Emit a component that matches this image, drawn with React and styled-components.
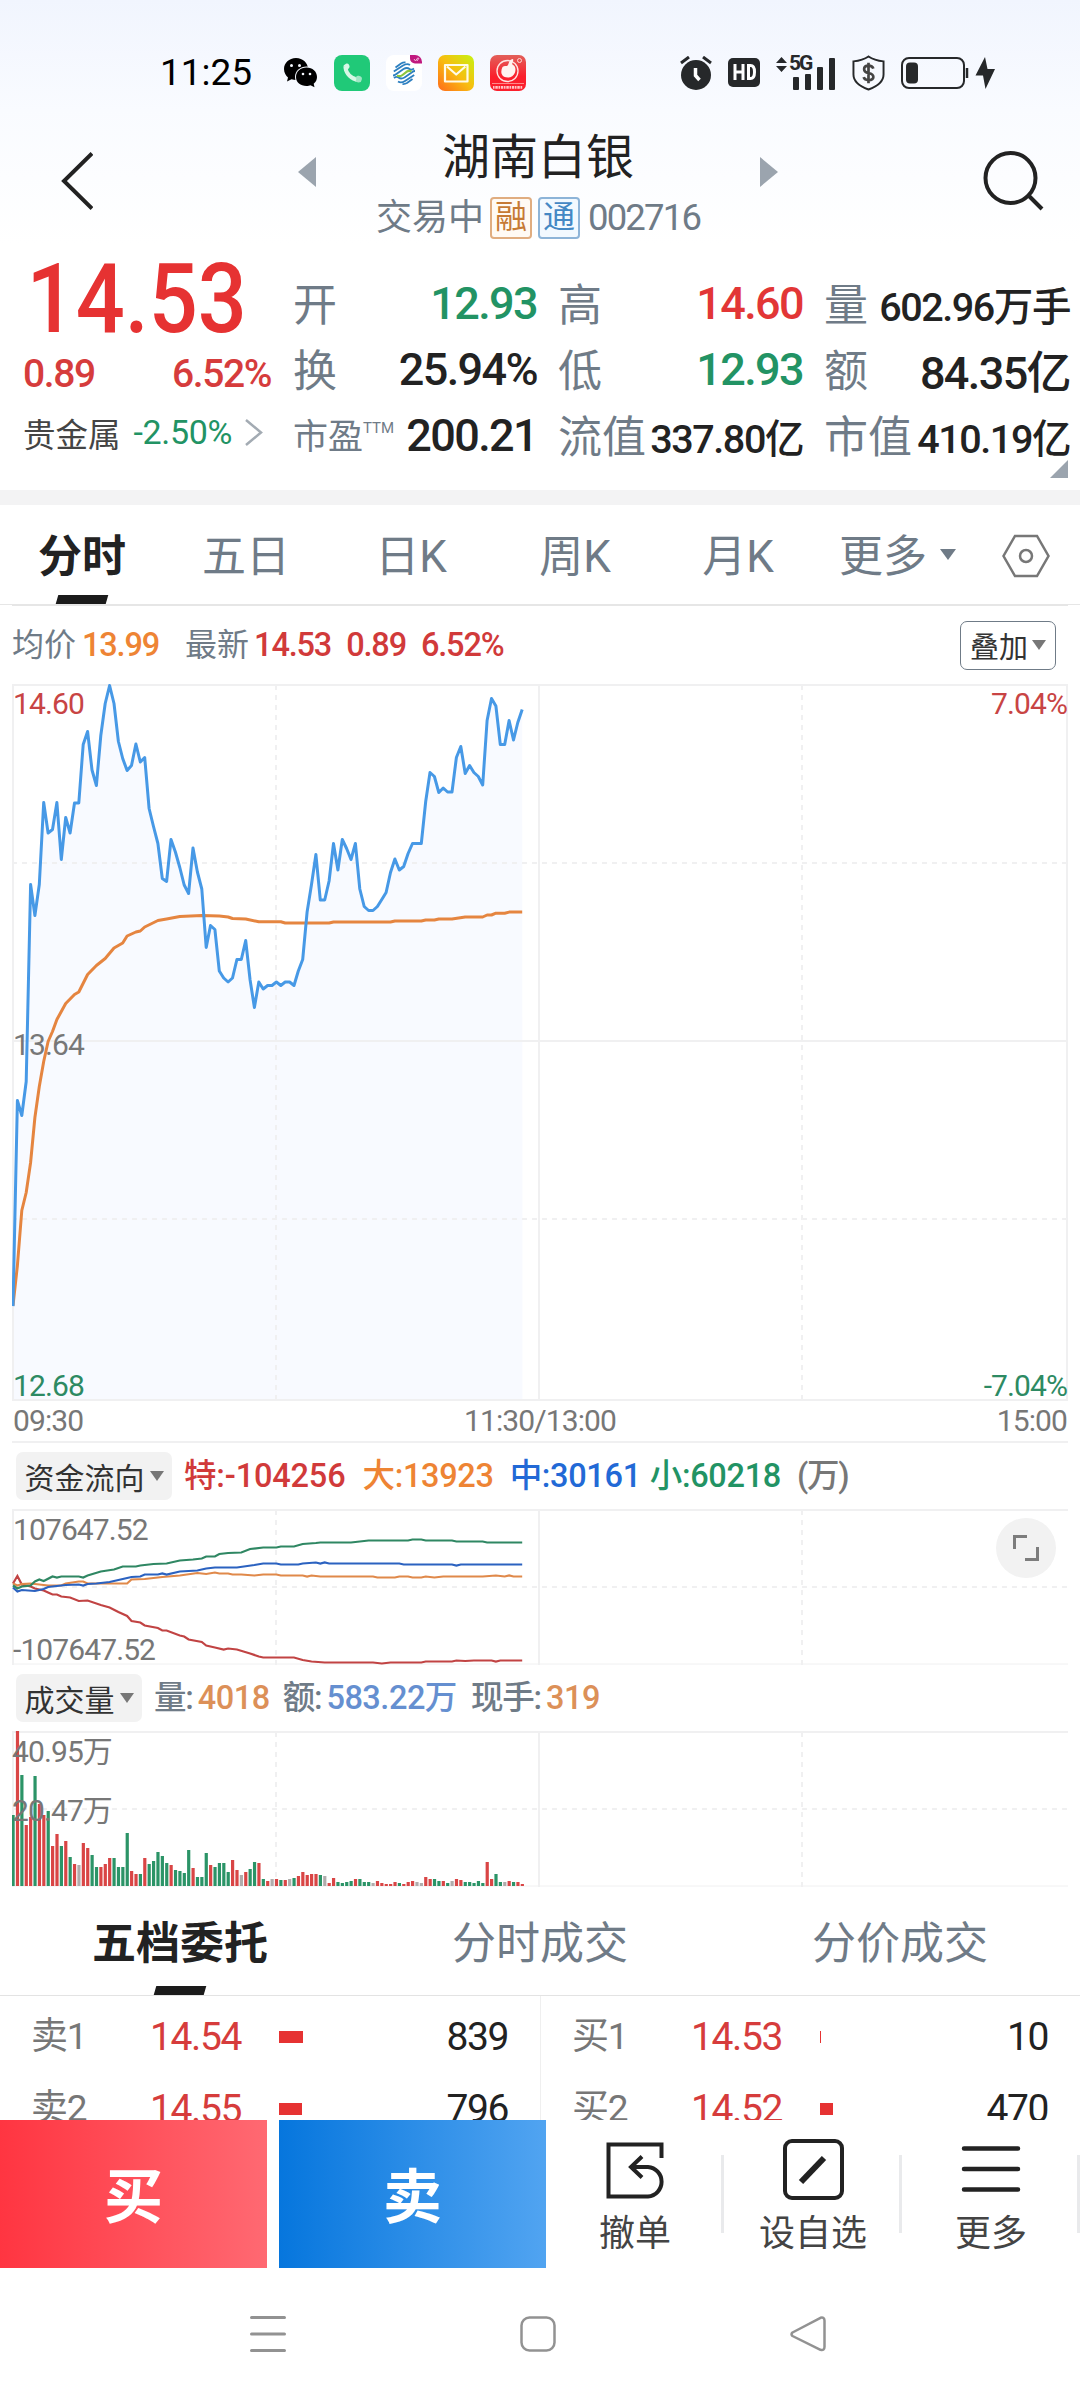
import React from "react";
import styled, { createGlobalStyle } from "styled-components";

const GlobalStyle = createGlobalStyle`
  * {
    box-sizing: border-box;
  }
  body {
    margin: 0;
    background: #fff;
    font-family: Roboto, "Noto Sans CJK SC", sans-serif;
    color: #222;
  }
  svg {
    display: block;
    flex: none;
  }
`;

const RED = "#e23636";
const GREEN = "#229364";
const ORANGE = "#ee8434";
const SLATE = "#6f7b87";
const GREY = "#777";
const LINE = "#f0f0f1";

const Screen = styled.div`
  width: 1080px;
  height: 2400px;
  overflow: hidden;
  display: flex;
  flex-direction: column;
  background: linear-gradient(#f1f5fe 0, #f9fbff 110px, #fff 245px);
`;

const Num = styled.span`
  font-size: ${(p) => p.$size}px;
  font-weight: ${(p) => p.$weight || 500};
  color: ${(p) => p.$color || "#222"};
  letter-spacing: ${(p) => (p.$track === undefined ? -0.036 : p.$track)}em;
  white-space: nowrap;
`;

/* ---------- status bar ---------- */

const StatusBar = styled.div`
  height: 110px;
  padding: 35px 85px 0 160px;
  display: flex;
  justify-content: space-between;
  align-items: center;
`;

const StatusGroup = styled.div`
  display: flex;
  align-items: center;
  gap: ${(p) => p.$gap}px;
`;

const Clock = styled.span`
  width: 108px;
  font-size: 37px;
  line-height: 40px;
  color: #000;
`;

/* ---------- header ---------- */

const Header = styled.header`
  height: 135px;
  padding: 15px 36px 0 61px;
  display: flex;
  justify-content: space-between;
`;

const HeaderIcon = styled.div`
  padding-top: ${(p) => p.$top}px;
`;

const Switcher = styled.div`
  width: 480px;
  display: flex;
  justify-content: space-between;
`;

const Heading = styled.div`
  width: 340px;
  padding-top: 4px;
  display: flex;
  flex-direction: column;
  align-items: center;
`;

const Title = styled.h1`
  margin: 0;
  font-size: 48px;
  font-weight: 400;
  line-height: 58px;
`;

const SubTitle = styled.div`
  margin-top: 8px;
  height: 46px;
  display: flex;
  align-items: center;
  font-size: 36px;
  line-height: 46px;
  color: ${SLATE};
  white-space: nowrap;
`;

const Tag = styled.span`
  width: 42px;
  height: 42px;
  margin-left: 6px;
  border: 2px solid ${(p) => p.$border};
  border-radius: 4px;
  background: ${(p) => p.$bg};
  color: ${(p) => p.$color};
  font-size: 32px;
  line-height: 37px;
  text-align: center;
`;

/* ---------- quote ---------- */

const Quote = styled.section`
  height: 245px;
  display: flex;
`;

const Main = styled.div`
  width: 293px;
  padding: 8px 22px 0 23px;
`;

const Price = styled.div`
  height: 92px;
  line-height: 92px;
  padding-left: 4px;
  transform: scaleX(0.89);
  transform-origin: 0 0;
`;

const Change = styled.div`
  height: 57px;
  display: flex;
  justify-content: space-between;
  align-items: center;
`;

const Industry = styled.div`
  height: 60px;
  padding-right: 8px;
  display: flex;
  justify-content: space-between;
  align-items: center;
  font-size: 32.5px;
  color: #444;
`;

const StatsArea = styled.div`
  flex: 1;
  padding: 25px 10px 0 0;
  display: flex;
  flex-direction: column;
  align-items: flex-end;
`;

const Stats = styled.div`
  width: 100%;
  display: grid;
  grid-template-columns: 244px 245px 246px;
  grid-auto-rows: 66px;
  column-gap: 21px;
`;

const Stat = styled.div`
  display: flex;
  justify-content: space-between;
  align-items: center;
  white-space: nowrap;
`;

const StatLabel = styled.span`
  padding-top: 5px;
  font-size: ${(p) => (p.$small ? 35 : 44)}px;
  line-height: 60px;
  color: ${SLATE};
  sup {
    font-size: 15px;
    line-height: 0;
    vertical-align: 16px;
  }
`;

const Corner = styled.i`
  margin: -8px 2px 0 0;
  border: 9px solid transparent;
  border-right-color: #9ba4ae;
  border-bottom-color: #9ba4ae;
`;

const Band = styled.div`
  height: 15px;
  background: #f3f3f4;
`;

/* ---------- period tabs ---------- */

const PeriodBar = styled.nav`
  height: 100px;
  display: flex;
  border-bottom: 1px solid #e6e6e6;
`;

const Tab = styled.div`
  width: ${(p) => p.$width}px;
  height: 100%;
  display: flex;
  flex-direction: column;
  align-items: center;
  justify-content: flex-end;
  font-size: 44px;
  font-weight: ${(p) => (p.$active ? 700 : 400)};
  color: ${(p) => (p.$active ? "#222" : SLATE)};
  line-height: 60px;

  &::after {
    content: "";
    width: 50px;
    height: 9px;
    margin-top: ${(p) => p.$drop || 8}px;
    transform: skewX(-16deg);
    background: ${(p) => (p.$active ? "#1b1b1b" : "transparent")};
  }
`;

const MoreTab = styled.div`
  margin-left: 19px;
  padding-top: 22px;
  display: flex;
  align-items: flex-start;
  font-size: 44px;
  line-height: 60px;
  color: ${SLATE};
`;

const Caret = styled.i`
  width: 0;
  height: 0;
  margin: ${(p) => p.$margin || "0"};
  border: ${(p) => p.$size}px solid transparent;
  border-top: ${(p) => p.$size * 1.45}px solid ${(p) => p.$color || GREY};
  border-bottom: 0;
`;

const Settings = styled.div`
  margin: 29px 0 0 46px;
`;

/* ---------- charts ---------- */

const ChartArea = styled.section`
  margin: 0 12px;
  display: flex;
  flex-direction: column;
`;

const Legend = styled.div`
  height: ${(p) => p.$height}px;
  display: flex;
  align-items: center;
  font-size: 32px;
  line-height: 46px;
  color: ${SLATE};
  white-space: nowrap;
`;

const PriceLegend = styled(Legend)`
  border-top: 1px solid #e6e6e6;
`;

const Gap = styled.span`
  width: ${(p) => p.$w}px;
`;

const OverlayButton = styled.button`
  width: 96px;
  height: 49px;
  margin: 0 12px 0 auto;
  padding: 0;
  display: flex;
  align-items: center;
  justify-content: center;
  border: 1px solid ${SLATE};
  border-radius: 7px;
  background: #fff;
  font: 29px Roboto, "Noto Sans CJK SC", sans-serif;
  color: #333;
`;

const Chip = styled.button`
  height: 48px;
  width: ${(p) => p.$width}px;
  margin: 0 12px 0 4px;
  padding: 0;
  display: flex;
  align-items: center;
  justify-content: center;
  border: 0;
  border-radius: 7px;
  background: #f2f2f2;
  font: 30px Roboto, "Noto Sans CJK SC", sans-serif;
  color: #333;
`;

/* drawing and labels share one grid cell */
const Plot = styled.div`
  height: ${(p) => p.$height}px;
  display: grid;
  > * {
    grid-area: 1 / 1;
  }
`;

const AxisLabels = styled.div`
  height: ${(p) => p.$height}px;
  padding: ${(p) => p.$pad || "0 1px"};
  display: flex;
  flex-direction: column;
  justify-content: space-between;
  align-items: ${(p) => (p.$right ? "flex-end" : "flex-start")};
  line-height: 36px;
`;

const TimeAxis = styled.div`
  height: 42px;
  display: flex;
  justify-content: space-between;
  align-items: center;
  padding: 0 1px 1px;
  border-bottom: 2px solid ${LINE};
`;

const Expand = styled.div`
  width: 60px;
  height: 60px;
  margin: 9px 12px 0 0;
  justify-self: end;
  display: flex;
  align-items: center;
  justify-content: center;
  border-radius: 50%;
  background: #f2f2f2;
`;

/* ---------- order book ---------- */

const BookTabs = styled.nav`
  height: 109px;
  display: flex;
  border-bottom: 1px solid #e3e3e3;
`;

const Book = styled.section`
  height: 124px;
  overflow: hidden;
  display: grid;
  grid-template-columns: 541px 539px;
`;

const BookSide = styled.div`
  padding-top: 5px;
`;

const BookSell = styled(BookSide)`
  border-right: 1px solid #efefef;
`;

const Level = styled.div`
  height: 72px;
  padding: 0 32px 0 31px;
  display: grid;
  grid-template-columns: 119px 129px 1fr auto;
  align-items: center;
  line-height: 50px;
`;

const Depth = styled.i`
  height: 12px;
  background: #e63232;
`;

/* ---------- bottom ---------- */

const Actions = styled.footer`
  height: 148px;
  display: flex;
`;

const Trade = styled.button`
  width: 267px;
  height: 148px;
  margin-right: ${(p) => p.$gap || 0}px;
  padding: 0 0 4px;
  border: 0;
  background: linear-gradient(90deg, ${(p) => p.$from}, ${(p) => p.$to});
  color: #fff;
  font: 700 59px "Noto Sans CJK SC", sans-serif;
`;

const Action = styled.div`
  width: 178px;
  padding-top: 17px;
  display: flex;
  flex-direction: column;
  align-items: center;
  font-size: 36px;
  line-height: 48px;
  color: #444;
  background: linear-gradient(#e9eaec, #e9eaec) right 35px / 3px 78px no-repeat;
`;

const ActionIcon = styled.div`
  height: 73px;
  padding-top: 2px;
`;

const NavBar = styled.div`
  flex: 1;
  padding: 48px 254px 0 250px;
  display: flex;
  justify-content: space-between;
`;

const STEP = 4.39;

// price chart heights, one per minute from 09:30
const price = [
  621.6, 416, 431, 397, 200, 231, 200, 118, 148.5, 145, 118, 175, 133, 148.5, 118.5, 118.5, 60, 47, 85.5, 101,
  51, 19, 1, 19, 57, 74, 86, 81, 59.5, 77.5, 73, 124, 142, 159, 194, 197, 155, 167.5, 183, 200.5,
  209, 163.5, 187.5, 204.5, 263, 241, 245, 286.5, 293.5, 297.5, 293.5, 275, 275, 256, 295.5, 323, 297.5, 304.5, 301, 301,
  297.5, 301, 297.5, 297.5, 301, 286.5, 275, 227.5, 200, 170, 215.5, 215.5, 196.5, 159, 185.5, 155, 164, 175, 159, 204.5,
  222, 226, 226, 222, 215, 208, 188, 174.5, 185.5, 182, 169, 159, 159, 159, 117, 88, 92, 108, 103.5, 107.5,
  107.5, 73, 62, 89, 81, 88, 92, 100.5, 36, 14, 21.5, 60, 60, 36, 55.5, 38, 25,
].map((y, m) => [m, y]);

const average = [
  [0, 621], [1, 581], [2, 526], [3, 508], [4, 478], [5, 433], [6, 402], [7, 377], [8, 357], [9, 347], [10, 335],
  [12, 319], [14, 310], [15, 307.5], [17, 290], [19, 281], [21, 274], [23, 263.5], [25, 258.5], [26, 251.5],
  [28, 247.5], [29, 246.5], [30, 242.5], [33, 236], [35, 234.5], [38, 232], [43, 231], [47, 231.5], [49, 232.5],
  [50, 234], [53, 234.5], [56, 237.3], [61, 237.3], [62, 238.5], [72, 238.5], [73, 237.5], [86, 237.5], [87, 236.5],
  [93, 236.5], [94, 235.5], [96, 235.5], [97, 234.5], [100, 234.5], [103, 232.5], [107, 232.5], [108, 230.5],
  [109, 230.5], [110, 228.7], [112, 228.7], [113, 227.6], [116, 227.6],
];

const flows = [
  {
    color: "#c14343",
    data: [
      [0, 74], [1, 66.5], [2, 75], [4, 77], [5, 79], [7, 81], [8, 83], [9, 85], [10, 85], [11, 87], [13, 88], [15, 91.5],
      [17, 91], [20, 95.5], [22, 98], [24, 102.5], [26, 106.5], [27, 111.5], [29, 113], [30, 116], [33, 118.5], [34, 121],
      [35, 121], [38, 126], [39, 127], [40, 130], [43, 132.5], [44, 136], [46, 138], [48, 140], [49, 139], [51, 140],
      [54, 144], [56, 147], [57, 148], [64, 148], [66, 150.5], [68, 152], [71, 153], [82, 153], [84, 154], [86, 153],
      [93, 153], [94, 152], [100, 152], [101, 151], [103, 151.5], [105, 151], [109, 151], [110, 152], [111, 151], [116, 151],
    ],
  },
  {
    color: "#e0894a",
    data: [
      [0, 74], [1, 76], [2, 74.5], [4, 74], [6, 75], [8, 76], [11, 76], [12, 74], [15, 72], [16, 72], [17, 74], [26, 74],
      [27, 70], [30, 69.5], [34, 67.5], [38, 66], [42, 63.5], [44, 64.5], [46, 63], [47, 64], [49, 64], [50, 65], [52, 65],
      [55, 66], [57, 65], [60, 65], [61, 66], [66, 66], [67, 67], [68, 66], [70, 67], [82, 67], [83, 68], [87, 68],
      [88, 67], [90, 67], [91, 68], [93, 68], [94, 67], [96, 68], [98, 67], [107, 67], [110, 66], [112, 67], [113, 66],
      [114, 67], [116, 67],
    ],
  },
  {
    color: "#2b62c0",
    data: [
      [0, 78], [1, 82], [2, 80.5], [5, 81.5], [7, 79.5], [8, 77.5], [10, 76.5], [12, 75.5], [15, 75], [16, 76], [17, 74.5],
      [19, 74], [22, 72.5], [24, 70.5], [27, 67.5], [29, 67], [30, 65], [33, 65], [34, 64], [35, 65], [38, 62], [42, 61],
      [44, 59], [46, 58], [51, 58], [55, 55.5], [57, 54], [60, 54], [61, 55], [65, 55], [66, 54], [69, 53], [70, 54],
      [71, 53], [72, 54], [88, 54], [89, 55], [100, 55], [101, 56], [102, 55], [116, 55],
    ],
  },
  {
    color: "#2f8763",
    data: [
      [0, 76], [1, 79], [2, 77], [4, 76], [5, 72], [6, 70], [7, 71.5], [9, 67], [10, 68], [11, 67], [15, 67], [16, 68],
      [17, 66], [20, 62], [23, 60], [24, 58.5], [25, 57], [28, 57], [29, 56], [32, 54.5], [35, 54], [38, 51], [41, 50],
      [43, 49], [44, 47], [46, 47], [47, 44.5], [49, 43.5], [52, 43], [54, 39.5], [57, 38], [60, 38], [61, 37], [64, 37],
      [66, 34.5], [69, 33.5], [70, 33], [77, 33], [81, 31], [90, 31], [91, 30], [93, 30], [94, 31], [100, 31], [101, 32],
      [107, 32], [108, 33], [116, 33],
    ],
  },
];

// r = up, g = down, n = flat
const volumes = (
  "g71 r155 g111 r61 r69 g110 r82 r71 g75 r40 r52 g40 r45 g29 r22 n21 r43 r38 g31 g19 r19 r22 r28 g28 g19 g19 g53 r15 r12 g12 " +
  "r28 g22 g25 g34 g30 g23 r21 g16 g15 g13 g36 r18 g9 g9 g33 r21 g19 g23 g23 g14 r26 r16 n11 r14 g17 g24 r23 g7 r5 n7 " +
  "r7 g6 r6 n7 g8 r10 r14 r11 r12 r12 g11 n10 r3 r8 g4 g3 g4 g5 r7 g7 g4 g4 n3 r5 r3 r2 r2 r4 g3 r2 " +
  "r4 r5 n4 n3 r9 r7 g7 g5 r5 g3 n5 r7 r6 g4 g4 g3 g5 g3 r24 r7 g12 g4 n4 r5 g4 r4 r2"
).split(" ");

const volumeColor = { r: "#d94545", g: "#2b9467", n: "#b0acac" };

const toPoints = (data) => data.map(([m, y]) => `${(1 + m * STEP).toFixed(1)},${y + 0.5}`).join(" ");

const Grid = ({ h, rows, closed }) => (
  <g stroke={LINE} strokeWidth="2" fill="none">
    <path d={`M0 1H1056M1 0V${h}M527 0V${h}`} />
    <path d={`M0 ${h - 1}H1056`} strokeWidth={closed ? 2 : 1} />
    {closed && <path d={`M1055 0V${h}`} />}
    <path d={`M264 1V${h}M790 1V${h}`} strokeDasharray="5 5" />
    {rows.map((y) => (
      <path key={y} d={`M0 ${y}H1056`} strokeDasharray="5 5" />
    ))}
  </g>
);

const PriceChart = () => (
  <svg width="1056" height="717" viewBox="0 0 1056 717">
    <polygon points={`1,715 ${toPoints(price)} 510.500,715`} fill="#f8faff" />
    <Grid h={717} rows={[179, 535]} closed />
    <path d="M0 357H1056" stroke={LINE} strokeWidth="2" />
    <polyline points={toPoints(average)} fill="none" stroke="#e58540" strokeWidth="3" strokeLinejoin="round" />
    <polyline points={toPoints(price)} fill="none" stroke="#4799e6" strokeWidth="3" strokeLinejoin="round" />
  </svg>
);

const FlowChart = () => (
  <svg width="1056" height="156" viewBox="0 0 1056 156">
    <Grid h={156} rows={[78]} />
    {flows.map((f) => (
      <polyline key={f.color} points={toPoints(f.data)} fill="none" stroke={f.color} strokeWidth="2.2" />
    ))}
  </svg>
);

const VolumeChart = () => (
  <svg width="1056" height="156" viewBox="0 0 1056 156">
    <Grid h={156} rows={[78]} />
    {volumes.map((v, m) => {
      const h = Number(v.slice(1));
      return <rect key={m} x={m * STEP - 0.5} y={155 - h} width="3.2" height={h} fill={volumeColor[v[0]]} />;
    })}
  </svg>
);

const WechatIcon = () => (
  <svg width="34" height="30" viewBox="0 0 34 30">
    <path d="M12 0C5 0 0 5 0 11c0 4 2 6.500 4 8.500L3 23.500l4.500-2.200c1.500.4 3 .7 4.500.7C19 22 24 17 24 11S19 0 12 0z" />
    <ellipse cx="22.500" cy="19" rx="11.500" ry="10.500" fill="#f6f9ff" />
    <path d="M22.500 9.500C16.500 9.500 12 13.500 12 19s4.500 9 10.500 9c1.500 0 3-.3 4-.8l4 2-.8-3.500C32 24 33 21.500 33 19c0-5.500-4.500-9.500-10.500-9.500z" />
    <g fill="#f6f9ff">
      <circle cx="7.500" cy="7.500" r="1.500" />
      <circle cx="15.500" cy="7.500" r="1.500" />
      <circle cx="19" cy="16" r="1.300" />
      <circle cx="26" cy="16" r="1.300" />
    </g>
  </svg>
);

const PhoneIcon = () => (
  <svg width="36" height="36" viewBox="0 0 36 36">
    <rect width="36" height="36" rx="8" fill="#20c978" />
    <path d="M11.500 12c1 6.500 5.500 11 12 12.500" stroke="#d8f7e6" strokeWidth="3.500" fill="none" />
    <path d="M9.500 10.500l2.500-1.800c2-1 3.500 1 3.500 2.800 0 1.500-1 2.500-3 3z" fill="#d8f7e6" />
    <path d="M21.500 22.500c1-1.500 2.500-2 4-1.500 2 .6 2.800 1.500 2.300 3.500l-1 2.500c-2 .8-4.500.3-6-.8z" fill="#9fe6c4" />
    <path d="M9.500 11c-.5 6 4.500 13.500 12 15.500l1-3c-5.500-1.500-9.500-6-10-11.500z" fill="#d8f7e6" />
  </svg>
);

const MobileIcon = () => (
  <svg width="36" height="36" viewBox="0 0 36 36">
    <rect width="36" height="36" rx="8" fill="#fff" />
    <path d="M24 0h5a7 7 0 0 1 7 7v1.500h-7a5 5 0 0 1-5-5z" fill="#c0187e" />
    <path d="M28 4l1.500 2L32 2.500M31 6l2-3" stroke="#f3b6da" fill="none" />
    <g fill="none" strokeWidth="1.800">
      <path
        d="M9.500 12.500L15 8.500q2-1.200 4.500-1M7.800 16.500L17 10.500q4-2.500 7-.5M7 20.500q1.500 0 3-1.200L17.500 14q3.500-2 6 0 2 1.500 4.500-.5"
        stroke="#2c7fc0"
      />
      <path
        d="M26.500 24L21 28q-2 1.200-4.500 1M28.200 20L19 26q-4 2.500-7 .5M29 16q-1.500 0-3 1.200L18.500 22.500q-3.500 2-6 0-2-1.500-4.500.5"
        stroke="#2c7fc0"
      />
      <path d="M11 20.500q3 1.500 5.500-.5l4-3.200q2.500-1.600 5-.3" stroke="#8cc63f" strokeWidth="2.200" />
    </g>
  </svg>
);

const MailIcon = () => (
  <svg width="36" height="36" viewBox="0 0 36 36">
    <defs>
      <linearGradient id="mail" x1="0" y1="1" x2="1" y2="0">
        <stop offset="0" stopColor="#ff6a1a" />
        <stop offset=".5" stopColor="#f8bd10" />
        <stop offset="1" stopColor="#c6f312" />
      </linearGradient>
    </defs>
    <rect width="36" height="36" rx="7" fill="url(#mail)" />
    <path d="M7 10h22.500v16.500H7zM9 11.500l9.200 8 9.200-8" fill="none" stroke="#fffbe8" strokeWidth="2.200" strokeLinejoin="round" />
  </svg>
);

const BrokerIcon = () => (
  <svg width="36" height="36" viewBox="0 0 36 36">
    <defs>
      <linearGradient id="broker" x1="0" y1="0" x2="0" y2="1">
        <stop offset="0" stopColor="#e2605a" />
        <stop offset=".6" stopColor="#fb1f2c" />
      </linearGradient>
    </defs>
    <rect width="36" height="36" rx="7" fill="url(#broker)" />
    <circle cx="17.500" cy="16" r="10.500" fill="none" stroke="#ffe5e2" strokeWidth="1.300" />
    <path d="M12.500 12c2-2 4.500 0 5.500-2s1.500-6 5-6c1 2-1.500 4-.5 5.500 3 1.500 3.500 4.500 2.500 8-1 3-4 5-7 5s-5.500-1-6.500-4c-.5-2 0-4.500 1-6.500z" fill="#fff3f0" />
    <circle cx="29.500" cy="5.500" r="2" fill="none" stroke="#ffd9d6" />
    <path d="M2 28.500h32" stroke="#ff8a8a" />
    <path d="M3 32.300h30" stroke="#ffc4c4" strokeWidth="2.800" strokeDasharray="1.500 .8 2.500 .7" />
  </svg>
);

const AlarmIcon = () => (
  <svg width="32" height="34" viewBox="0 0 32 34">
    <circle cx="16" cy="19" r="15" fill="#26282a" />
    <path d="M1 7l8-6M31 7l-8-6" stroke="#26282a" strokeWidth="3" />
    <path d="M15.500 12v7.500l4 4.500" stroke="#fff" strokeWidth="3.500" fill="none" />
  </svg>
);

const HdIcon = () => (
  <svg width="32" height="29" viewBox="0 0 32 29">
    <rect width="32" height="29" rx="5" fill="#26282a" />
    <path d="M7 6v16M15 6v16M7 14h8M20.500 7.500h2q4 0 4 6.500t-4 6.500h-2z" stroke="#fff" strokeWidth="3" fill="none" />
  </svg>
);

const Signal = styled.div`
  width: 60px;
  height: 34px;
  display: grid;
  > * {
    grid-area: 1 / 1;
  }
`;

const SignalText = styled.span`
  padding-left: 13px;
  font-size: 21px;
  line-height: 15px;
  font-weight: 700;
  letter-spacing: -2px;
  color: #26282a;
`;

const SignalIcon = () => (
  <Signal>
    <svg width="60" height="34" viewBox="0 0 60 34" fill="#26282a">
      <path d="M0 7l5.500-6L11 7zM0 10l5.500 6L11 10z" />
      <rect x="17" y="21" width="6" height="13" rx="1" />
      <rect x="29" y="18" width="6" height="16" rx="1" />
      <rect x="41" y="11" width="6" height="23" rx="1" />
      <rect x="53" y="2" width="6" height="32" rx="1" />
    </svg>
    <SignalText>5G</SignalText>
  </Signal>
);

const ShieldIcon = () => (
  <svg width="33" height="36" viewBox="0 0 34 37" fill="none" stroke="#26282a">
    <path d="M17 1.500C12 5 7 6 1.500 6.500V20c0 7 6 12 15.500 15.500C26.500 32 32.500 27 32.500 20V6.500C27 6 22 5 17 1.500z" strokeWidth="2" />
    <path d="M22 14q-1-3-5-3-4.500 0-4.500 3.500T17 18.500q5 1 5 4t-5 3.300q-4 0-5-3M17 8v21" stroke="#444" strokeWidth="2.800" />
  </svg>
);

const BatteryIcon = () => (
  <svg width="94" height="32" viewBox="0 0 94 32" fill="none" stroke="#26282a">
    <rect x="1" y="1" width="62" height="30" rx="7" strokeWidth="2" />
    <path d="M66 11v10" strokeWidth="2.500" />
    <rect x="5" y="5.500" width="12" height="21" rx="4" fill="#26282a" stroke="none" />
    <path d="M84 0L74.500 18.500H82L84.500 32 94 12h-7.500z" fill="#26282a" stroke="none" />
  </svg>
);

const stats = [
  { label: "开", value: "12.93", color: GREEN },
  { label: "高", value: "14.60", color: RED },
  { label: "量", value: "602.96万手", size: 39.5 },
  { label: "换", value: "25.94%" },
  { label: "低", value: "12.93", color: GREEN },
  { label: "额", value: "84.35亿" },
  { label: "市盈", sup: "TTM", value: "200.21" },
  { label: "流值", value: "337.80亿", size: 39.5 },
  { label: "市值", value: "410.19亿", size: 39.5 },
];

const asks = [
  { name: "卖1", price: "14.54", depth: 24, qty: "839" },
  { name: "卖2", price: "14.55", depth: 23, qty: "796" },
];

const bids = [
  { name: "买1", price: "14.53", depth: 1, qty: "10" },
  { name: "买2", price: "14.52", depth: 13, qty: "470" },
];

const Levels = ({ items }) =>
  items.map((l) => (
    <Level key={l.name}>
      <Num $size={37} $weight={400} $color={GREY}>{l.name}</Num>
      <Num $size={39} $weight={400} $color="#d63c3c">{l.price}</Num>
      <Depth style={{ width: l.depth }} />
      <Num $size={39} $weight={400}>{l.qty}</Num>
    </Level>
  ));

const Axis = ({ children, color = GREY }) => (
  <Num $size={30} $weight={400} $color={color} $track={-0.03}>{children}</Num>
);

const App = () => {
  return (
    <>
      <GlobalStyle />
      <Screen>
        <StatusBar>
          <StatusGroup $gap={16}>
            <Clock>11:25</Clock>
            <WechatIcon />
            <PhoneIcon />
            <MobileIcon />
            <MailIcon />
            <BrokerIcon />
          </StatusGroup>
          <StatusGroup $gap={16}>
            <AlarmIcon />
            <HdIcon />
            <SignalIcon />
            <ShieldIcon />
            <BatteryIcon />
          </StatusGroup>
        </StatusBar>

        <Header>
          <HeaderIcon $top={27}>
            <svg width="32" height="58" viewBox="0 0 32 58">
              <path d="M31 1.500L3 29l28 27.500" fill="none" stroke="#222" strokeWidth="4" />
            </svg>
          </HeaderIcon>
          <Switcher>
            <HeaderIcon $top={32}>
              <svg width="18" height="30" viewBox="0 0 18 30"><path d="M18 0v30L0 15z" fill="#9ba4ae" /></svg>
            </HeaderIcon>
            <Heading>
              <Title>湖南白银</Title>
              <SubTitle>
                交易中
                <Tag $border="#e0ad80" $bg="#fffaf4" $color="#c67a35">融</Tag>
                <Tag $border="#8db4d8" $bg="#f2f9ff" $color="#4488c4">通</Tag>
                <Gap $w={8} />
                <Num $size={36.5} $weight={400} $color={SLATE} $track={-0.05}>002716</Num>
              </SubTitle>
            </Heading>
            <HeaderIcon $top={32}>
              <svg width="18" height="30" viewBox="0 0 18 30"><path d="M0 0v30l18-15z" fill="#9ba4ae" /></svg>
            </HeaderIcon>
          </Switcher>
          <HeaderIcon $top={26}>
            <svg width="61" height="60" viewBox="0 0 61 60" fill="none" stroke="#222" strokeWidth="4">
              <circle cx="27.500" cy="27" r="25" />
              <path d="M45 44l14 14" />
            </svg>
          </HeaderIcon>
        </Header>

        <Quote>
          <Main>
            <Price><Num $size={97} $color="#e63232" $track={0}>14.53</Num></Price>
            <Change>
              <Num $size={39} $color="#d63c3c">0.89</Num>
              <Num $size={39} $color="#d63c3c">6.52%</Num>
            </Change>
            <Industry>
              贵金属
              <Num $size={34} $weight={400} $color={GREEN} $track={-0.01}>-2.50%</Num>
              <svg width="18" height="27" viewBox="0 0 18 27">
                <path d="M1 1l15 12.500L1 26" fill="none" stroke="#a3abb3" strokeWidth="2.500" />
              </svg>
            </Industry>
          </Main>
          <StatsArea>
            <Stats>
              {stats.map((s) => (
                <Stat key={s.label}>
                  <StatLabel $small={s.sup}>{s.label}{s.sup && <sup>{s.sup}</sup>}</StatLabel>
                  <Num $size={s.size || 45} $color={s.color}>{s.value}</Num>
                </Stat>
              ))}
            </Stats>
            <Corner />
          </StatsArea>
        </Quote>

        <Band />

        <PeriodBar>
          <Tab $width={164} $active>分时</Tab>
          <Tab $width={164}>五日</Tab>
          <Tab $width={166}>日K</Tab>
          <Tab $width={162}>周K</Tab>
          <Tab $width={164}>月K</Tab>
          <MoreTab>更多<Caret $size={8} $color={SLATE} $margin="22px 0 0 13px" /></MoreTab>
          <Settings>
            <svg width="48" height="44" viewBox="0 0 48 44" fill="none" stroke={GREY} strokeWidth="2.500">
              <path d="M13 2h22l11.500 20L35 42H13L1.500 22z" />
              <circle cx="24" cy="22" r="6" />
            </svg>
          </Settings>
        </PeriodBar>

        <ChartArea>
          <PriceLegend $height={79}>
            均价<Gap $w={6} /><Num $size={32.5} $color={ORANGE}>13.99</Num>
            <Gap $w={26} />
            最新<Gap $w={5} /><Num $size={32.5} $color="#d13a3a">14.53</Num>
            <Gap $w={15} /><Num $size={32.5} $color="#d13a3a">0.89</Num>
            <Gap $w={15} /><Num $size={32.5} $color="#d13a3a">6.52%</Num>
            <OverlayButton>叠加<Caret $size={7} $margin="0 0 0 4px" /></OverlayButton>
          </PriceLegend>

          <Plot $height={717}>
            <PriceChart />
            <AxisLabels $height={720} $pad="2px 1px 0">
              <Axis color="#c84444">14.60</Axis>
              <Axis>13.64</Axis>
              <Axis color="#2d8a63">12.68</Axis>
            </AxisLabels>
            <AxisLabels $height={720} $pad="2px 1px 0" $right>
              <Axis color="#c84444">7.04%</Axis>
              <Axis color="#2d8a63">-7.04%</Axis>
            </AxisLabels>
          </Plot>
          <TimeAxis>
            <Axis>09:30</Axis>
            <Axis>11:30/13:00</Axis>
            <Axis>15:00</Axis>
          </TimeAxis>

          <Legend $height={66}>
            <Chip $width={156}>资金流向<Caret $size={7} $margin="0 0 0 5px" /></Chip>
            <Num $size={32.5} $color="#d13a3a" $track={-0.005}>特:-104256</Num>
            <Gap $w={17} />
            <Num $size={32.5} $color={ORANGE} $track={-0.01}>大:13923</Num>
            <Gap $w={16} />
            <Num $size={32.5} $color="#2269d6" $track={-0.01}>中:30161</Num>
            <Gap $w={9} />
            <Num $size={32.5} $color={GREEN} $track={-0.01}>小:60218</Num>
            <Gap $w={16} />
            <Num $size={32.5} $color={GREY}>(万)</Num>
          </Legend>
          <Plot $height={156}>
            <FlowChart />
            <AxisLabels $height={159} $pad="3px 1px 0">
              <Axis>107647.52</Axis>
              <Axis>-107647.52</Axis>
            </AxisLabels>
            <Expand>
              <svg width="28" height="28" viewBox="0 0 28 28" fill="none" stroke="#7d7d7d" strokeWidth="3">
                <path d="M2.500 15V2.500H15M25.500 13v12.500H13" />
              </svg>
            </Expand>
          </Plot>

          <Legend $height={66}>
            <Chip $width={126}>成交量<Caret $size={7} $margin="0 0 0 5px" /></Chip>
            <Num $size={32.5} $color={SLATE}>量:</Num><Gap $w={5} />
            <Num $size={32.5} $color="#dc9058" $track={-0.015}>4018</Num>
            <Gap $w={13} />
            <Num $size={32.5} $color={SLATE}>额:</Num><Gap $w={5} />
            <Num $size={32.5} $color="#658fd0" $track={-0.015}>583.22万</Num>
            <Gap $w={14} />
            <Num $size={32.5} $color={SLATE}>现手:</Num><Gap $w={5} />
            <Num $size={32.5} $color="#dc9058" $track={-0.015}>319</Num>
          </Legend>
          <Plot $height={156}>
            <VolumeChart />
            <AxisLabels $height={98} $pad="3px 0 0">
              <Axis>40.95万</Axis>
              <Axis>20.47万</Axis>
            </AxisLabels>
          </Plot>
        </ChartArea>

        <BookTabs>
          <Tab $width={360} $drop={12} $active>五档委托</Tab>
          <Tab $width={360} $drop={12}>分时成交</Tab>
          <Tab $width={360} $drop={12}>分价成交</Tab>
        </BookTabs>

        <Book>
          <BookSell><Levels items={asks} /></BookSell>
          <BookSide><Levels items={bids} /></BookSide>
        </Book>

        <Actions>
          <Trade $from="#ff3541" $to="#ff6972" $gap={12}>买</Trade>
          <Trade $from="#0676dd" $to="#51a4f1">卖</Trade>
          <Action>
            <ActionIcon>
              <svg width="60" height="60" viewBox="0 0 60 60" fill="none" stroke="#222" strokeWidth="4">
                <path d="M56.500 19V5.500H3.500v52H43a14.800 14.800 0 0 0 0-29.500H26M37 17.500L26 28l11 10.500" />
              </svg>
            </ActionIcon>
            撤单
          </Action>
          <Action>
            <ActionIcon>
              <svg width="61" height="61" viewBox="0 0 61 61" fill="none" stroke="#222" strokeWidth="4">
                <rect x="2" y="2" width="57" height="57" rx="7" />
                <path d="M18 43L41 19" strokeWidth="6" />
              </svg>
            </ActionIcon>
            设自选
          </Action>
          <Action>
            <ActionIcon>
              <svg width="60" height="60" viewBox="0 0 60 60" stroke="#222" strokeWidth="4.500" strokeLinecap="round">
                <path d="M3 9.500h54M3 30h54M3 50.500h54" />
              </svg>
            </ActionIcon>
            更多
          </Action>
        </Actions>

        <NavBar>
          <svg width="36" height="36" viewBox="0 0 36 36" stroke="#929292" strokeWidth="3" strokeLinecap="round">
            <path d="M1.500 1.500h33M1.500 18h33M1.500 34.500h33" />
          </svg>
          <svg width="36" height="36" viewBox="0 0 36 36" fill="none" stroke="#929292" strokeWidth="2.500">
            <rect x="1.500" y="1.500" width="33" height="33" rx="8" />
          </svg>
          <svg width="36" height="36" viewBox="0 0 36 36" fill="none" stroke="#929292" strokeWidth="2.500" strokeLinejoin="round">
            <path d="M2.500 16.500L30.500 1.800q4-1 4 3v26q0 4-4 3L2.500 20q-2-1.700 0-3.500z" />
          </svg>
        </NavBar>
      </Screen>
    </>
  );
};

export default App;
